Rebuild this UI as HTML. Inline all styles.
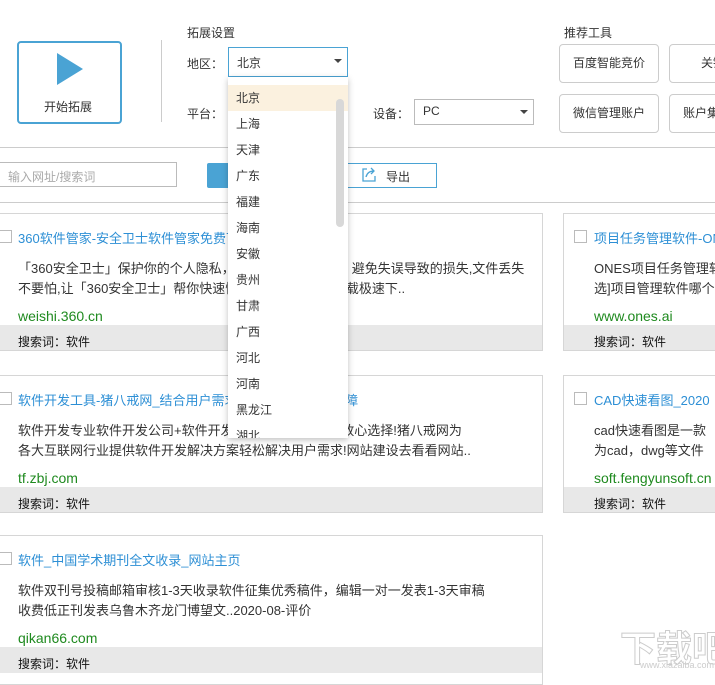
<!DOCTYPE html>
<html><head><meta charset="utf-8"><style>
*{margin:0;padding:0;box-sizing:border-box}
body{width:715px;height:672px;overflow:hidden;background:#fff;position:relative;font-family:"Liberation Sans","Noto Sans CJK SC",sans-serif;font-size:12px;color:#333}
.a{position:absolute;white-space:nowrap}
.card{position:absolute;border:1px solid #d6d6d6;background:#fff;overflow:hidden}
.card .cb{position:absolute;left:-1px;top:16px;width:13px;height:13px;border:1px solid #bbb;background:#fff}
.card .t{position:absolute;left:18px;top:14px;color:#2d8fd5;font-size:13px;white-space:nowrap}
.card .d{position:absolute;left:18px;top:45px;font-size:13px;line-height:20px;color:#333;white-space:nowrap}
.card .u{position:absolute;left:18px;top:94px;font-size:14px;color:#1f8a1f;white-space:nowrap}
.card .f{position:absolute;left:0;right:0;top:111px;height:26px;background:#e8e8e8;font-size:12px;color:#111;padding:8px 0 0 18px}
.tool{position:absolute;border:1px solid #ccc;border-radius:4px;font-size:12px;color:#333;text-align:center;line-height:37px;height:39px;width:100px;background:#fff;white-space:nowrap;overflow:hidden}
.dd{position:absolute;left:228px;top:77px;width:120px;height:361px;background:#fff;box-shadow:0 2px 6px rgba(0,0,0,.25);overflow:hidden}
.dd div{height:26px;line-height:26px;padding-left:8px;font-size:12px;color:#333}
</style></head><body>
<div class="a" style="left:17px;top:41px;width:105px;height:83px;border:2px solid #4aa3d4;border-radius:4px"></div>
<svg class="a" style="left:55px;top:52px" width="30" height="34"><polygon points="2,1 28,17 2,33" fill="#4aa3d4"/></svg>
<div class="a" style="left:44px;top:98px;font-size:12px">开始拓展</div>
<div class="a" style="left:161px;top:40px;width:1px;height:82px;background:#ccc"></div>
<div class="a" style="left:187px;top:24px">拓展设置</div>
<div class="a" style="left:187px;top:55px">地区：</div>
<div class="a" style="left:228px;top:47px;width:120px;height:30px;border:1px solid #4aa3d4;padding:6px 0 0 8px">北京</div>
<div class="a" style="left:334px;top:59px;width:0;height:0;border-left:4px solid transparent;border-right:4px solid transparent;border-top:4px solid #444"></div>
<div class="a" style="left:187px;top:105px">平台：</div>
<div class="a" style="left:373px;top:105px">设备：</div>
<div class="a" style="left:414px;top:99px;width:120px;height:26px;border:1px solid #bbb;padding:4px 0 0 8px">PC</div>
<div class="a" style="left:520px;top:110px;width:0;height:0;border-left:4px solid transparent;border-right:4px solid transparent;border-top:4px solid #444"></div>
<div class="a" style="left:564px;top:24px">推荐工具</div>
<div class="tool" style="left:559px;top:44px">百度智能竞价</div>
<div class="tool" style="left:669px;top:44px">关键词</div>
<div class="tool" style="left:559px;top:94px">微信管理账户</div>
<div class="tool" style="left:669px;top:94px;text-align:left;padding-left:13px">账户集</div>
<div class="a" style="left:0;top:147px;width:715px;height:1px;background:#ccc"></div>
<div class="a" style="left:-2px;top:162px;width:179px;height:25px;border:1px solid #bbb;color:#aaa;padding:5px 0 0 9px">输入网址/搜索词</div>
<div class="a" style="left:207px;top:163px;width:50px;height:25px;background:#4aa3d4;border-radius:2px"></div>
<div class="a" style="left:346px;top:163px;width:91px;height:25px;border:1px solid #4aa3d4;padding:4px 0 0 39px">导出</div>
<svg class="a" style="left:361px;top:167px" width="16" height="16"><path d="M6 2H2v12h12v-5" fill="none" stroke="#4aa3d4" stroke-width="1.3"/><path d="M5 10c1-4 4-6 8-6M10 1l3 3-3 3" fill="none" stroke="#4aa3d4" stroke-width="1.3"/></svg>
<div class="a" style="left:0;top:202px;width:715px;height:1px;background:#ccc"></div>

<div class="card" style="left:-1px;top:213px;width:544px;height:138px"><div class="cb"></div><div class="t">360软件管家-安全卫士软件管家免费下载</div><div class="d">「360安全卫士」保护你的个人隐私，有效避免系统漏洞，避免失误导致的损失,文件丢失<br>不要怕,让「360安全卫士」帮你快速恢复,更多软件免费下载极速下..</div><div class="u">weishi.360.cn</div><div class="f">搜索词：软件</div></div>
<div class="card" style="left:563px;top:213px;width:160px;height:138px"><div class="cb" style="left:10px"></div><div class="t" style="left:30px">项目任务管理软件-ONES</div><div class="d" style="left:30px">ONES项目任务管理软件<br>选]项目管理软件哪个好</div><div class="u" style="left:30px">www.ones.ai</div><div class="f" style="padding-left:30px">搜索词：软件</div></div>
<div class="card" style="left:-1px;top:375px;width:544px;height:138px"><div class="cb"></div><div class="t">软件开发工具-猪八戒网_结合用户需求开发软件,售后有保障</div><div class="d">软件开发专业软件开发公司+软件开发定制服务,售后服务放心选择!猪八戒网为<br>各大互联网行业提供软件开发解决方案轻松解决用户需求!网站建设去看看网站..</div><div class="u">tf.zbj.com</div><div class="f">搜索词：软件</div></div>
<div class="card" style="left:563px;top:375px;width:160px;height:138px"><div class="cb" style="left:10px"></div><div class="t" style="left:30px">CAD快速看图_2020</div><div class="d" style="left:30px">cad快速看图是一款<br>为cad，dwg等文件</div><div class="u" style="left:30px">soft.fengyunsoft.cn</div><div class="f" style="padding-left:30px">搜索词：软件</div></div>
<div class="card" style="left:-1px;top:535px;width:544px;height:150px"><div class="cb"></div><div class="t">软件_中国学术期刊全文收录_网站主页</div><div class="d">软件双刊号投稿邮箱审核1-3天收录软件征集优秀稿件，编辑一对一发表1-3天审稿<br>收费低正刊发表乌鲁木齐龙门博望文..2020-08-评价</div><div class="u">qikan66.com</div><div class="f">搜索词：软件</div></div>
<div class="a" style="left:620px;top:620px;font-size:36px;color:#fff;font-weight:bold;-webkit-text-stroke:1px #ccc">下载吧</div>
<div class="a" style="left:640px;top:660px;font-size:9px;color:#ccc">www.xiazaiba.com</div>

<div class="dd">
<div style="margin-top:8px;background:#fbf1df">北京</div><div>上海</div><div>天津</div><div>广东</div><div>福建</div><div>海南</div><div>安徽</div><div>贵州</div><div>甘肃</div><div>广西</div><div>河北</div><div>河南</div><div>黑龙江</div><div>湖北</div>
<span style="position:absolute;left:108px;top:22px;width:8px;height:128px;background:#d8d8d8;border-radius:4px"></span>
</div>
</body></html>
